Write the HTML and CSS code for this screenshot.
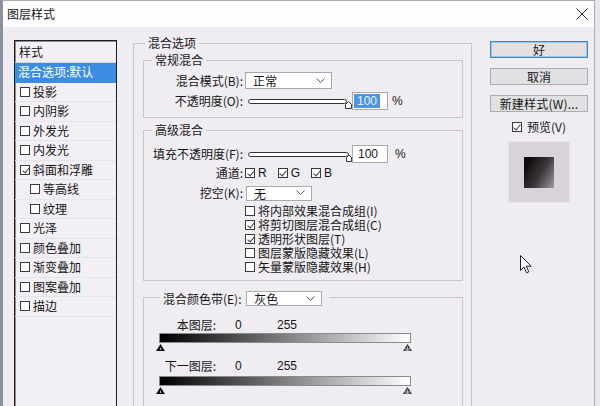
FILE: index.html
```html
<!DOCTYPE html>
<html lang="zh-CN">
<head>
  <meta charset="UTF-8" />
  <title>图层样式</title>
  <link rel="stylesheet" href="styles.css">
</head>
<body>
  <div class="window">
    <div class="titlebar">
      <span class="title">图层样式</span>
      <svg class="close" width="12" height="12" viewBox="0 0 12 12"><path d="M0.5 0.5 L11.5 11.5 M11.5 0.5 L0.5 11.5" stroke="#2a2a2a" stroke-width="1" fill="none"/></svg>
    </div>

    <div class="dialog">
      <div class="style-list">
        <div class="list-head">样式</div>
        <div class="list-item selected">混合选项:默认</div>
        <div class="list-item"><span class="cb"></span>投影</div>
        <div class="list-item"><span class="cb"></span>内阴影</div>
        <div class="list-item"><span class="cb"></span>外发光</div>
        <div class="list-item"><span class="cb"></span>内发光</div>
        <div class="list-item"><span class="cb on"></span>斜面和浮雕</div>
        <div class="list-item sub"><span class="cb"></span>等高线</div>
        <div class="list-item sub"><span class="cb"></span>纹理</div>
        <div class="list-item"><span class="cb"></span>光泽</div>
        <div class="list-item"><span class="cb"></span>颜色叠加</div>
        <div class="list-item"><span class="cb"></span>渐变叠加</div>
        <div class="list-item"><span class="cb"></span>图案叠加</div>
        <div class="list-item"><span class="cb"></span>描边</div>
      </div>

      <div class="main">
        <fieldset class="group outer">
          <legend class="legend-outer">混合选项</legend>

          <fieldset class="group general">
            <legend class="legend-inner">常规混合</legend>
            <div class="row row-mode">
              <span class="lbl">混合模式(B):</span>
              <div class="select select-mode">正常<svg width="9" height="6" viewBox="0 0 9 6"><path d="M0.5 0.5 L4.5 4.5 L8.5 0.5" fill="none" stroke="#555"/></svg></div>
            </div>
            <div class="row row-opacity">
              <span class="lbl">不透明度(O):</span>
              <svg class="slider" width="106" height="16" viewBox="0 0 106 16"><rect x="2.5" y="6.5" width="98" height="4" rx="2" fill="#fff" stroke="#333"/><path d="M99.5 15.5 V11.5 L102.5 8.5 L105.5 11.5 V15.5 Z" fill="#fff" stroke="#333"/></svg>
              <span class="num"><span class="hl">100</span></span>
              <span class="pct">%</span>
            </div>
          </fieldset>

          <fieldset class="group advanced">
            <legend class="legend-inner">高级混合</legend>
            <div class="row row-fill">
              <span class="lbl">填充不透明度(F):</span>
              <svg class="slider" width="106" height="16" viewBox="0 0 106 16"><rect x="2.5" y="6.5" width="100" height="4" rx="2" fill="#fff" stroke="#333"/><path d="M100.5 15.5 V11.5 L103 9 L105.5 11.5 V15.5 Z" fill="#fff" stroke="#333"/></svg>
              <span class="num fill-num">100</span>
              <span class="pct pct-fill">%</span>
            </div>
            <div class="row row-channels">
              <span class="lbl">通道:</span>
              <span class="cb on ch-first"></span><span class="ch-name">R</span>
              <span class="cb on ch-next"></span><span class="ch-name">G</span>
              <span class="cb on ch-next"></span><span class="ch-name">B</span>
            </div>
            <div class="row row-knock">
              <span class="lbl">挖空(K):</span>
              <div class="select select-knock">无<svg width="9" height="6" viewBox="0 0 9 6"><path d="M0.5 0.5 L4.5 4.5 L8.5 0.5" fill="none" stroke="#555"/></svg></div>
            </div>
            <div class="checks">
              <div class="check-row"><span class="cb"></span>将内部效果混合成组(I)</div>
              <div class="check-row"><span class="cb on"></span>将剪切图层混合成组(C)</div>
              <div class="check-row"><span class="cb on"></span>透明形状图层(T)</div>
              <div class="check-row"><span class="cb"></span>图层蒙版隐藏效果(L)</div>
              <div class="check-row"><span class="cb"></span>矢量蒙版隐藏效果(H)</div>
            </div>
          </fieldset>

          <fieldset class="group bands">
            <legend class="legend-bands">
              <span class="band-title">混合颜色带(E):</span>
              <span class="select select-band">灰色<svg width="9" height="6" viewBox="0 0 9 6"><path d="M0.5 0.5 L4.5 4.5 L8.5 0.5" fill="none" stroke="#555"/></svg></span>
            </legend>

            <div class="band-row first">
              <span class="band-lbl">本图层:</span><span class="v0">0</span><span class="v1">255</span>
            </div>
            <div class="bar"></div>
            <div class="thumbs">
              <svg width="9" height="7" viewBox="0 0 9 7"><path d="M4.5 0 L9 7 H0 Z" fill="#111"/><path d="M4.5 4 V6" stroke="#bbb"/></svg>
              <svg width="9" height="7" viewBox="0 0 9 7"><path d="M4.5 0 L9 7 H0 Z" fill="#333"/><path d="M3 4 V7 M4.5 2.5 V7 M6 4 V7" stroke="#ddd" stroke-width="0.8"/></svg>
            </div>

            <div class="band-row second">
              <span class="band-lbl">下一图层:</span><span class="v0">0</span><span class="v1">255</span>
            </div>
            <div class="bar bar-second"></div>
            <div class="thumbs">
              <svg width="9" height="7" viewBox="0 0 9 7"><path d="M4.5 0 L9 7 H0 Z" fill="#111"/><path d="M4.5 4 V6" stroke="#bbb"/></svg>
              <svg width="9" height="7" viewBox="0 0 9 7"><path d="M4.5 0 L9 7 H0 Z" fill="#333"/><path d="M3 4 V7 M4.5 2.5 V7 M6 4 V7" stroke="#ddd" stroke-width="0.8"/></svg>
            </div>
          </fieldset>
        </fieldset>
      </div>

      <div class="side">
        <button class="btn default">好</button>
        <button class="btn">取消</button>
        <button class="btn btn-new">新建样式(W)...</button>
        <div class="preview-toggle"><span class="cb on"></span>预览(V)</div>
        <div class="preview-box"><div class="preview-swatch"></div></div>
      </div>
    </div>

    <svg class="cursor" width="13" height="19" viewBox="0 0 13 19"><path d="M0.5 0.5 V15.5 L4 12 L6.5 17.8 L8.8 16.8 L6.3 11.2 H11.2 Z" fill="#fff" stroke="#222" stroke-width="1" stroke-linejoin="round"/></svg>
  </div>
</body>
</html>
```

FILE: styles.css
```css
* {
  box-sizing: border-box;
}

body {
  margin: 0;
  background: #e8e7eb;
  font-family: "Noto Sans CJK SC", "Microsoft YaHei", sans-serif;
  font-size: 12px;
  line-height: 16px;
  color: #161616;
  overflow: hidden;
}

.window {
  position: relative;
  width: 595px;
  height: 406px;
  border-top: 1px solid #a4a8b0;
  border-left: 3px solid #8a92a2;
  border-right: 1px solid #acacb4;
  background: #f0edf2;
  overflow: hidden;
}

.titlebar {
  height: 26px;
  background: #fdfdfd;
  display: flex;
  align-items: center;
  justify-content: space-between;
  padding: 0 6px 0 4px;
}

.dialog {
  display: flex;
  align-items: flex-start;
  padding-left: 11px;
}

/* style list on the left */

.style-list {
  width: 103px;
  height: 400px;
  margin-top: 13px;
  border: 1px solid #1f1f1f;
  box-shadow: inset 1px 1px 0 #8d8d8d;
  background: #f3f0f5;
}

.list-head {
  height: 22px;
  line-height: 22px;
  padding-left: 4px;
  border-bottom: 1px solid #d9d5db;
}

.list-item {
  height: 19.5px;
  line-height: 18px;
  display: flex;
  align-items: center;
  padding-left: 5px;
  border-bottom: 1px solid #e7e4e9;
  white-space: nowrap;
}

.list-item.selected {
  background: #3a8de3;
  color: #fff;
  padding-left: 3px;
  border-bottom-color: #3a8de3;
}

.list-item.sub {
  padding-left: 15px;
}

.list-item .cb {
  margin-right: 3px;
}

.cb {
  position: relative;
  display: inline-block;
  flex: none;
  width: 10px;
  height: 10px;
  border: 1px solid #3a3a3a;
  background: #fff;
}

.cb.on::after {
  content: "";
  position: absolute;
  left: 2.5px;
  top: 0;
  width: 3px;
  height: 6px;
  border: solid #3a3a3a;
  border-width: 0 1.3px 1.3px 0;
  transform: rotate(40deg);
}

/* main panel */

.main {
  width: 339px;
  margin-left: 16px;
  margin-top: 8px;
}

.group {
  margin: 0;
  padding: 0;
  min-width: 0;
  border: 1px solid #c9c5cb;
}

.group legend {
  padding: 0 3px;
  line-height: 16px;
}

.outer {
  height: 420px;
  padding: 1px 8px 0 9px;
}

.legend-outer {
  margin-left: 2px;
}

.legend-inner {
  margin-left: 8px;
}

.general {
  padding-bottom: 7px;
}

.row {
  display: flex;
  align-items: center;
}

.lbl {
  width: 99px;
  text-align: right;
  white-space: nowrap;
}

.row-mode {
  height: 17px;
  margin-top: 4px;
}

.row-opacity {
  height: 18px;
  margin-top: 3px;
}

.select {
  display: flex;
  align-items: center;
  justify-content: space-between;
  background: #fff;
  border: 1px solid #a9a9a9;
  padding: 0 6px 0 7px;
  line-height: 13px;
}

.select-mode {
  width: 87px;
  height: 17px;
  margin-left: 2px;
}

.slider {
  margin-left: 3px;
  flex: none;
}

.num {
  width: 36px;
  height: 18px;
  border: 1px solid #a9a9a9;
  background: #fff;
  display: flex;
  align-items: center;
  padding-left: 1px;
  font-family: "Liberation Sans", sans-serif;
}

.hl {
  background: #4b95e4;
  color: #eaf3ff;
  padding: 0 3px;
  line-height: 14px;
}

.fill-num {
  padding-left: 5px;
}

.pct {
  margin-left: 4px;
  font-family: "Liberation Sans", sans-serif;
}

.pct-fill {
  margin-left: 7px;
}

.advanced {
  margin-top: 4px;
  padding-bottom: 6px;
}

.row-fill {
  height: 18px;
  margin-top: 7px;
}

.row-channels {
  height: 16px;
  margin-top: 2px;
}

.ch-first {
  margin-left: 2px;
}

.ch-next {
  margin-left: 11px;
}

.ch-name {
  margin-left: 3px;
  font-family: "Liberation Sans", sans-serif;
}

.row-knock {
  height: 16px;
  margin-top: 4px;
}

.select-knock {
  width: 66px;
  height: 15px;
  margin-left: 3px;
}

.checks {
  margin-top: 3px;
  padding-left: 101px;
}

.check-row {
  height: 14px;
  line-height: 14px;
  display: flex;
  align-items: center;
  white-space: nowrap;
}

.check-row .cb {
  margin-right: 3px;
}

/* blend-if bands */

.bands {
  margin-top: 8px;
  padding-bottom: 12px;
}

.legend-bands {
  margin-left: 16px;
  padding-right: 7px !important;
}

.band-title,
.select-band {
  vertical-align: middle;
}

.select-band {
  display: inline-flex;
  width: 76px;
  height: 15px;
  margin-left: 2px;
}

.band-row {
  display: flex;
  align-items: center;
  height: 14px;
  line-height: 14px;
}

.band-row.first {
  margin-top: 11px;
}

.band-row.second {
  margin-top: 8px;
}

.band-lbl {
  width: 72px;
  text-align: right;
}

.v0 {
  width: 42px;
  margin-left: 19px;
  font-family: "Liberation Sans", sans-serif;
}

.v1 {
  font-family: "Liberation Sans", sans-serif;
}

.bar {
  width: 252px;
  height: 10px;
  margin: 1px 0 0 15px;
  border: 1px solid #8a8a8a;
  background: linear-gradient(to right, #000, #fff);
}

.bar-second {
  margin-top: 3px;
}

.thumbs {
  display: flex;
  justify-content: space-between;
  width: 256px;
  height: 7px;
  margin: 1px 0 0 12px;
}

/* right column */

.side {
  width: 98px;
  margin-left: 18px;
  margin-top: 14px;
  display: flex;
  flex-direction: column;
  align-items: center;
}

.btn {
  width: 98px;
  height: 17px;
  margin: 0 0 10px;
  padding: 0;
  font: inherit;
  color: #161616;
  line-height: 15px;
  background: #e1e0e2;
  border: 1px solid #adadad;
}

.btn.default {
  background: #e6dfdf;
  border: 1px solid #3f86c6;
  box-shadow: inset 0 0 0 1px #9ec3e6;
}

.btn-new {
  margin-bottom: 8px;
  letter-spacing: 0.2px;
}

.preview-toggle {
  height: 14px;
  line-height: 14px;
  display: flex;
  align-items: center;
}

.preview-toggle .cb {
  margin-right: 5px;
}

.preview-box {
  width: 62px;
  height: 62px;
  margin-top: 7px;
  background: #d7d3d9;
  border: 1px solid #e6e3e8;
  display: flex;
  align-items: center;
  justify-content: center;
}

.preview-swatch {
  width: 30px;
  height: 31px;
  background: linear-gradient(120deg, #0f0c0f 15%, #3c363a 55%, #9f999d 100%);
}

.cursor {
  position: absolute;
  left: 517px;
  top: 254px;
}
```
